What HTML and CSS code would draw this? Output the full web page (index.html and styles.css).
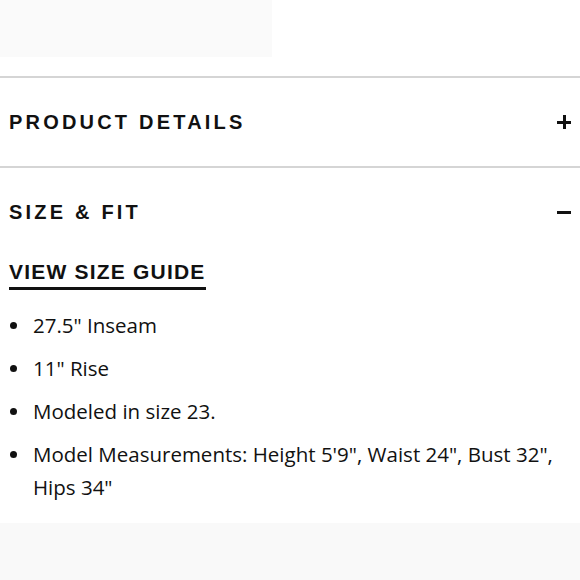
FILE: index.html
```html
<!DOCTYPE html>
<html>
<head>
<meta charset="utf-8">
<link rel="stylesheet" href="styles.css">
</head>
<body>
<div class="top-band"></div>
<section class="acc">
  <div class="acc-head">
    <h2 class="acc-title">PRODUCT DETAILS</h2>
    <span class="acc-icon plus"></span>
  </div>
</section>
<section class="acc open">
  <div class="acc-head">
    <h2 class="acc-title">SIZE &amp; FIT</h2>
    <span class="acc-icon minus"></span>
  </div>
  <div class="acc-body">
    <a class="guide" href="#">VIEW SIZE GUIDE</a>
    <ul class="specs">
      <li>27.5" Inseam</li>
      <li>11" Rise</li>
      <li>Modeled in size 23.</li>
      <li>Model Measurements: Height 5'9", Waist 24", Bust 32", Hips 34"</li>
    </ul>
  </div>
</section>
<div class="bottom-band"></div>
</body>
</html>
```
FILE: styles.css
```css
html, body {
  margin: 0;
  padding: 0;
  background: #ffffff;
}
body {
  width: 580px;
  height: 580px;
  overflow: hidden;
  font-family: "Open Sans", "Liberation Sans", sans-serif;
  color: #111;
}
.top-band {
  width: 272px;
  height: 57px;
  background: #fafafa;
  margin-bottom: 19px;
}
.acc {
  border-top: 2px solid #d5d5d5;
}
.acc-head {
  height: 88px;
  display: flex;
  align-items: center;
  justify-content: space-between;
  padding: 0 9px 0 9px;
}
.acc-title {
  margin: 0;
  font-family: "Liberation Sans", sans-serif;
  font-weight: 700;
  font-size: 20px;
  letter-spacing: 3.2px;
  color: #111;
}
.acc-icon {
  position: relative;
  width: 14px;
  height: 14px;
}
.acc-icon::before,
.acc-icon::after {
  content: "";
  position: absolute;
  background: #111;
}
.acc-icon::before {
  left: 0;
  right: 0;
  top: 6px;
  height: 2.5px;
}
.plus::after {
  top: 0;
  bottom: 0;
  left: 6px;
  width: 2.5px;
}
.minus::after {
  display: none;
}
.acc-body {
  padding: 4px 9px 9px 9px;
}
.guide {
  display: inline-block;
  font-family: "Liberation Sans", sans-serif;
  font-weight: 700;
  font-size: 21px;
  letter-spacing: 1.2px;
  color: #111;
  text-decoration: none;
  border-bottom: 3px solid #111;
  line-height: 24px;
  padding-bottom: 3px;
}
.specs {
  list-style: none;
  margin: 19px 0 0 0;
  padding: 0;
}
.specs li {
  position: relative;
  padding-left: 24px;
  font-size: 20.5px;
  line-height: 33px;
  margin-bottom: 10px;
  color: #111;
}
.specs li::before {
  content: "";
  position: absolute;
  left: 1px;
  top: 13px;
  width: 7px;
  height: 7px;
  border-radius: 50%;
  background: #111;
}
.bottom-band {
  height: 80px;
  background: #f9f9f9;
}
```
